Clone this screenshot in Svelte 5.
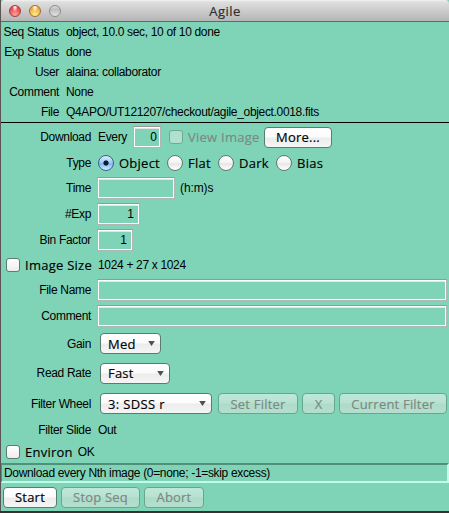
<script lang="ts">
  const status = [
    { label: "Seq Status", value: "object, 10.0 sec, 10 of 10 done" },
    { label: "Exp Status", value: "done" },
    { label: "User", value: "alaina: collaborator" },
    { label: "Comment", value: "None" },
    { label: "File", value: "Q4APO/UT121207/checkout/agile_object.0018.fits" },
  ];

  const types = ["Object", "Flat", "Dark", "Bias"];

  let type = $state("Object");
  let every = $state("0");
  let time = $state("");
  let numExp = $state("1");
  let binFactor = $state("1");
  let fileName = $state("");
  let comment = $state("");
</script>

{#snippet popup(text: string, size: string)}
  <button class="btn popup {size}">
    <span>{text}</span>
    <svg width="7" height="5" viewBox="0 0 7 5"><path d="M0.2 0H6.8L3.5 5Z" fill="#505050" /></svg>
  </button>
{/snippet}

<div class="window">
  <header>
    <div class="lights">
      <i class="red"></i>
      <i class="yellow"></i>
      <i class="gray"></i>
    </div>
    <h1>Agile</h1>
  </header>

  <section class="status">
    {#each status as item}
      <div class="line">
        <span class="label">{item.label}</span>
        <span>{item.value}</span>
      </div>
    {/each}
  </section>

  <section class="form">
    <div class="row download">
      <span class="label">Download</span>
      <span class="every">Every</span>
      <input class="w-every num" bind:value={every} />
      <span class="check off"></span>
      <span class="ui view off-text">View Image</span>
      <button class="btn more">More...</button>
    </div>
    <div class="row type">
      <span class="label">Type</span>
      {#each types as name}
        <button class="radio {name.toLowerCase()}" onclick={() => (type = name)}>
          <span class="dot" class:on={type === name}></span>
          <span class="ui">{name}</span>
        </button>
      {/each}
    </div>
    <div class="row">
      <span class="label">Time</span>
      <input class="w-time" bind:value={time} />
      <span class="unit">(h:m)s</span>
    </div>
    <div class="row">
      <span class="label">#Exp</span>
      <input class="w-exp num" bind:value={numExp} />
    </div>
    <div class="row">
      <span class="label">Bin Factor</span>
      <input class="w-bin num" bind:value={binFactor} />
    </div>
    <div class="row checked size">
      <span class="label"><span class="check"></span><span class="ui">Image Size</span></span>
      <span>1024 + 27 x 1024</span>
    </div>
    <div class="row">
      <span class="label">File Name</span>
      <input class="wide" bind:value={fileName} />
    </div>
    <div class="row">
      <span class="label">Comment</span>
      <input class="wide" bind:value={comment} />
    </div>
    <div class="row gain">
      <span class="label">Gain</span>
      {@render popup("Med", "med")}
    </div>
    <div class="row rate">
      <span class="label">Read Rate</span>
      {@render popup("Fast", "fast")}
    </div>
    <div class="row wheel">
      <span class="label">Filter Wheel</span>
      {@render popup("3: SDSS r", "filter")}
      <button class="btn set" disabled>Set Filter</button>
      <button class="btn x" disabled>X</button>
      <button class="btn current" disabled>Current Filter</button>
    </div>
    <div class="row slide">
      <span class="label">Filter Slide</span>
      <span>Out</span>
    </div>
    <div class="row checked environ">
      <span class="label"><span class="check"></span><span class="ui">Environ</span></span>
      <span>OK</span>
    </div>
  </section>

  <div class="help"><span>Download every Nth image (0=none; -1=skip excess)</span></div>

  <footer>
    <button class="btn start">Start</button>
    <button class="btn stop" disabled>Stop Seq</button>
    <button class="btn abort" disabled>Abort</button>
  </footer>
</div>

<style>
  :global(body) {
    background: #3c2f2f;
    overflow: hidden;
  }

  .window {
    box-sizing: border-box;
    width: 449px;
    height: 511px;
    border-left: 1px solid #5a5552;
    background: #7fd4b7;
    color: #000;
    font: 12px/16px "Liberation Sans", Arial, sans-serif;
    letter-spacing: -0.33px;
    white-space: nowrap;
    display: flex;
    flex-direction: column;
  }

  header {
    box-sizing: border-box;
    height: 22px;
    flex: none;
    display: grid;
    grid-template-columns: 1fr auto 1fr;
    align-items: center;
    background: linear-gradient(#f2f2f2 0, #dedede 2px, #b5b5b5 100%);
    border-bottom: 1px solid #676767;
    border-radius: 4px 4px 0 0;
  }

  h1 {
    grid-column: 2;
    margin: 0;
    font: 13px/20px "Open Sans", "Noto Sans", sans-serif;
    letter-spacing: 0.5px;
    color: #2e2e2e;
    -webkit-text-stroke: 0.2px #2e2e2e;
  }

  .lights {
    display: flex;
    gap: 8px;
    padding-left: 8px;
  }

  .lights i {
    box-sizing: border-box;
    width: 12px;
    height: 12px;
    border-radius: 50%;
    border: 1px solid #777;
  }

  .lights .red {
    background: radial-gradient(ellipse at 50% 12%, #fff 0, #ffb0ad 18%, transparent 38%), radial-gradient(circle at 50% 90%, #ffa59d, #e8474a 70%);
    border-color: #a33c3c;
  }

  .lights .yellow {
    background: radial-gradient(ellipse at 50% 12%, #fff 0, #ffe2ae 18%, transparent 38%), radial-gradient(circle at 50% 90%, #fff086, #f0a840 70%);
    border-color: #9c6d33;
  }

  .lights .gray {
    background: linear-gradient(#dcdcdc, #bebebe 35%, #e3e3e3);
    border-color: #8b8b8b;
  }

  .status {
    border-bottom: 1px solid #000;
  }

  .line {
    display: flex;
    height: 20px;
    align-items: center;
    gap: 7px;
  }

  .line .label {
    width: 58px;
    text-align: right;
  }

  .row {
    display: flex;
    align-items: center;
    height: 26px;
    padding-right: 2px;
  }

  .row > .label {
    width: 90px;
    margin-right: 6px;
    text-align: right;
    flex: none;
  }

  .download {
    height: 28px;
  }

  .type,
  .size {
    height: 24px;
  }

  .gain {
    height: 29px;
  }

  .rate {
    height: 30px;
  }

  .wheel {
    height: 31px;
  }

  .slide {
    height: 21px;
  }

  .environ {
    height: 23px;
  }

  .slide > :last-child,
  .size > :last-child {
    margin-left: 1px;
  }

  .ui {
    font: 13px/18px "Open Sans", "Noto Sans", sans-serif;
    letter-spacing: 0.25px;
    -webkit-text-stroke: 0.15px currentColor;
  }

  input {
    box-sizing: border-box;
    height: 22px;
    padding: 0 5px;
    background: transparent;
    border: 1px solid #b4b4b4;
    border-top-color: #989898;
    border-radius: 0;
    box-shadow: inset 0 0 0 1px #fff, inset 0 2px 0 #e4e4e4;
    font: inherit;
    color: inherit;
    outline: none;
  }

  .num {
    text-align: right;
  }

  .every {
    width: 29px;
    margin: 0 6px 0 1px;
  }

  .w-every {
    width: 28px;
    padding: 0 3px;
  }

  .w-time {
    width: 78px;
  }

  .w-exp {
    width: 43px;
  }

  .w-bin {
    width: 36px;
  }

  .wide {
    flex: 1;
    min-width: 0;
  }

  .unit {
    margin-left: 5px;
    letter-spacing: -0.1px;
  }

  .check {
    box-sizing: border-box;
    width: 14px;
    height: 14px;
    flex: none;
    border: 1px solid #5c7c70;
    border-radius: 3px;
    background: linear-gradient(#fff, #ededed);
  }

  .check.off {
    margin: 0 5px 0 8px;
    background: #b0e0cf;
    border-color: #72a792;
  }

  .off-text {
    color: #7d8882;
  }

  .view {
    width: 70px;
  }

  .row.checked > .label {
    box-sizing: border-box;
    display: flex;
    align-items: center;
    gap: 5px;
    padding-left: 5px;
  }

  .row.environ > .label {
    width: auto;
    margin-right: 5px;
  }

  .btn {
    box-sizing: border-box;
    height: 21px;
    flex: none;
    display: flex;
    align-items: center;
    justify-content: center;
    padding: 0;
    border: 1px solid #5a7c6f;
    border-radius: 4px;
    background: linear-gradient(#fff, #fbfbfb 48%, #ececec 52%, #f5f5f5);
    font: 13px/18px "Open Sans", "Noto Sans", sans-serif;
    letter-spacing: 0.2px;
    -webkit-text-stroke: 0.15px currentColor;
    color: #000;
  }

  .btn:disabled {
    color: #7d8882;
    border-color: #69a68e;
    background: linear-gradient(#bee9d9, #b7e2d1 48%, #addbc9 52%, #b4dfcf);
  }

  .popup {
    margin-left: 3px;
    padding: 0 5px 0 7px;
    justify-content: space-between;
  }

  .more {
    width: 68px;
    margin-left: 6px;
  }

  .med {
    width: 61px;
  }

  .fast {
    width: 70px;
  }

  .filter {
    width: 112px;
    letter-spacing: 0.35px;
  }

  .set {
    width: 80px;
    margin-left: 6px;
  }

  .x {
    width: 33px;
    margin-left: 4px;
  }

  .current {
    width: 108px;
    margin-left: 4px;
  }

  .radio {
    display: flex;
    align-items: center;
    gap: 5px;
    padding: 0 0 0 1px;
    border: 0;
    background: none;
    color: inherit;
  }

  .radio.object {
    width: 69px;
  }

  .radio.flat {
    width: 51px;
  }

  .radio.dark {
    width: 58px;
  }

  .dot {
    box-sizing: border-box;
    width: 16px;
    height: 16px;
    flex: none;
    border: 1px solid #5c7c70;
    border-radius: 50%;
    background: linear-gradient(#fff, #f3f3f3 48%, #e6e6e6 55%, #fff);
  }

  .dot.on {
    border-color: #3e5d96;
    background: radial-gradient(circle, #0d1b38 2.2px, transparent 3px), linear-gradient(#e3f0fb, #9cc9f2 48%, #7db8ee 55%, #cdf0ff);
  }

  .help {
    box-sizing: border-box;
    height: 20px;
    margin-top: auto;
    flex: none;
    display: flex;
    align-items: center;
    padding-left: 2px;
    border: 2px solid;
    border-color: #52907a #c2fbe9 #c2fbe9 #52907a;
    border-left-width: 1px;
  }

  footer {
    display: flex;
    align-items: center;
    height: 28px;
    flex: none;
    gap: 4px;
    padding-left: 2px;
  }

  .start {
    width: 54px;
  }

  .stop {
    width: 79px;
  }

  .abort {
    width: 60px;
  }
</style>
